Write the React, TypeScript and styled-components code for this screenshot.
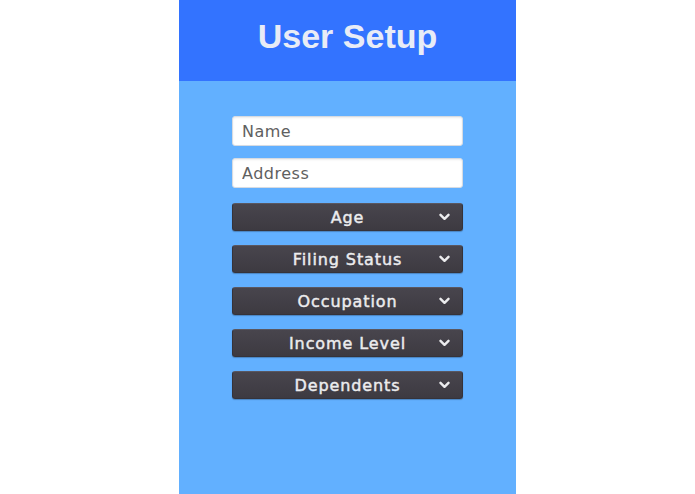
import React from "react";
import styled, { createGlobalStyle } from "styled-components";

const Global = createGlobalStyle`
  html, body { margin: 0; padding: 0; background: #ffffff; }
  body { font-family: "DejaVu Sans", sans-serif; }
  * { box-sizing: border-box; }
`;

const Page = styled.div`
  display: flex;
  justify-content: center;
  min-height: 494px;
`;

const Panel = styled.div`
  width: 337px;
  min-height: 494px;
  background: #62b0ff;
  display: flex;
  flex-direction: column;
`;

const Header = styled.header`
  height: 81px;
  background: #3373ff;
  display: flex;
  justify-content: center;
  padding-top: 16px;
`;

const Title = styled.h1`
  margin: 0;
  font-family: "Liberation Sans", Arial, sans-serif;
  font-weight: 700;
  font-size: 34px;
  line-height: 40px;
  color: #e8ecf6;
`;

const Form = styled.div`
  display: flex;
  flex-direction: column;
  align-items: center;
  padding-top: 35px;
`;

const Input = styled.input`
  width: 231px;
  height: 30px;
  margin-bottom: 12px;
  padding: 0 9px;
  border: 1px solid #d6dbe2;
  border-radius: 3px;
  background: #ffffff;
  font-family: "DejaVu Sans", Verdana, sans-serif;
  font-size: 16px;
  letter-spacing: 0.5px;
  color: #333;
  outline: none;
  box-shadow: inset 0 1px 2px rgba(0, 0, 0, 0.08);
  &::placeholder { color: #606060; }
`;

const Selects = styled.div`
  display: flex;
  flex-direction: column;
  gap: 14px;
  margin-top: 3px;
`;

const Select = styled.div`
  position: relative;
  width: 231px;
  height: 28px;
  border-radius: 3px;
  background: linear-gradient(#48454d, #3d3a41);
  border: 1px solid #35333a;
  border-top-color: #5a5760;
  box-shadow: 0 1px 1px rgba(0, 0, 0, 0.25);
  display: flex;
  align-items: center;
  justify-content: center;
  color: #ececee;
  font-family: "DejaVu Sans", Verdana, sans-serif;
  font-weight: 400;
  font-size: 16px;
  letter-spacing: 0.9px;
  -webkit-text-stroke: 0.45px #ececee;
`;

const Chevron = styled.svg`
  position: absolute;
  right: 12px;
  top: 50%;
  margin-top: -4px;
  width: 11px;
  height: 8px;
`;

const fields = ["Age", "Filing Status", "Occupation", "Income Level", "Dependents"];

export default function App() {
  return (
    <>
      <Global />
      <Page>
        <Panel>
          <Header>
            <Title>User Setup</Title>
          </Header>
          <Form>
            <Input placeholder="Name" />
            <Input placeholder="Address" />
            <Selects>
              {fields.map((f) => (
                <Select key={f}>
                  {f}
                  <Chevron viewBox="0 0 11 8">
                    <path d="M1.5 1.8 L5.5 5.8 L9.5 1.8" fill="none" stroke="#ececee" strokeWidth="2.4" strokeLinecap="round" strokeLinejoin="round" />
                  </Chevron>
                </Select>
              ))}
            </Selects>
          </Form>
        </Panel>
      </Page>
    </>
  );
}
